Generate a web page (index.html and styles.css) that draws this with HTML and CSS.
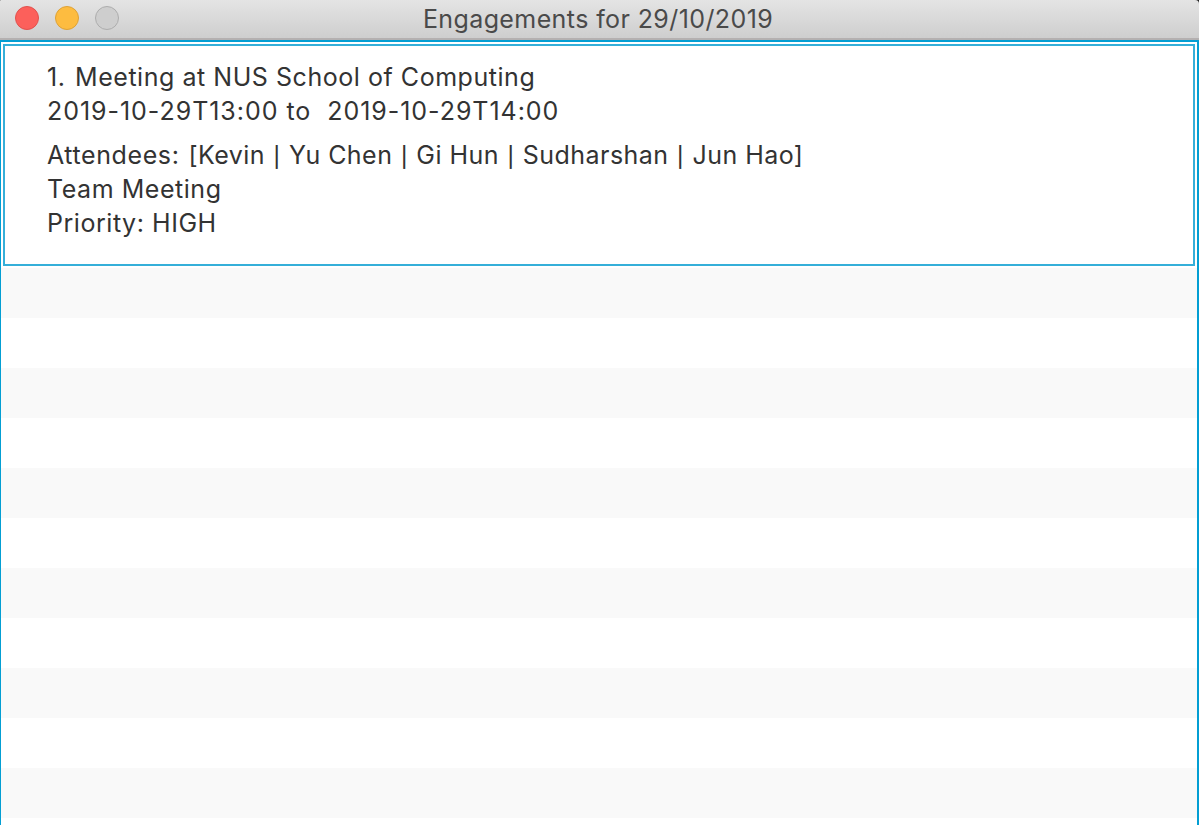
FILE: index.html
```html
<!DOCTYPE html>
<html lang="en">
<head>
<meta charset="utf-8">
<title>Engagements for 29/10/2019</title>
<link rel="stylesheet" href="styles.css">
</head>
<body>
<div class="window">
<header class="titlebar">
<div class="controls"><span class="dot close"></span><span class="dot minimize"></span><span class="dot disabled"></span></div>
<h1 class="title">Engagements for 29/10/2019</h1>
</header>
<main class="list">
<article class="cell">
<p class="name"><span class="index">1.</span> Meeting at NUS School of Computing</p>
<p class="time">2019-10-29T13:00 to&nbsp; 2019-10-29T14:00</p>
<p class="attendees"><span class="label">Attendees:</span> [Kevin <span class="sep">|</span> Yu Chen <span class="sep">|</span> Gi Hun <span class="sep">|</span> Sudharshan <span class="sep">|</span> Jun Hao]</p>
<p>Team Meeting</p>
<p>Priority: HIGH</p>
</article>
<div class="rows"></div>
</main>
</div>
</body>
</html>
```
FILE: styles.css
```css
* { box-sizing: border-box; }
body { margin: 0; background: #222; font-family: Inter, "Liberation Sans", sans-serif; color: #333; }
.window { height: 825px; display: flex; flex-direction: column; overflow: hidden; border-radius: 1px 4px 0 0; }
.titlebar { height: 40px; flex: none; display: grid; grid-template-columns: 200px 1fr 203px; background: linear-gradient(#e4e4e4, #cecece); border-bottom: 2px solid #b4b0b0; }
.controls { display: flex; gap: 16px; padding: 6px 0 0 15px; }
.dot { width: 24px; height: 24px; border-radius: 50%; border: 1px solid; }
.close { background: #fc605b; border-color: #e2514d; }
.minimize { background: #fdbc40; border-color: #dea236; }
.disabled { background: #cecece; border-color: #adadad; }
.title { margin: 0; text-align: center; font-size: 25px; font-weight: 400; line-height: 38px; letter-spacing: .4px; color: #4a4a4a; white-space: nowrap; }
.list { flex: 1; display: flex; flex-direction: column; background: #fff; border: 2px solid #039ed3; border-width: 2px 2px 0 1px; padding-top: 2px; }
.cell { flex: none; height: 222px; margin: 0 2px; border: 2px solid #35afd9; padding: 14px 42px; font-size: 25px; }
.cell p { margin: 0; line-height: 34px; letter-spacing: .54px; white-space: nowrap; }
.cell .name { letter-spacing: .54px; }
.index { margin-right: 2px; }
.cell .time { letter-spacing: .96px; }
.cell .attendees { margin-top: 10px; letter-spacing: .45px; }
.label { letter-spacing: .6px; margin-right: 1.5px; }
.sep { display: inline-block; width: 9px; font-size: 20px; font-weight: 500; line-height: 20px; text-align: center; }
.rows { flex: 1; margin-top: 2px; background: repeating-linear-gradient(#f9f9f9 0 50px, #fff 50px 100px); }
```
